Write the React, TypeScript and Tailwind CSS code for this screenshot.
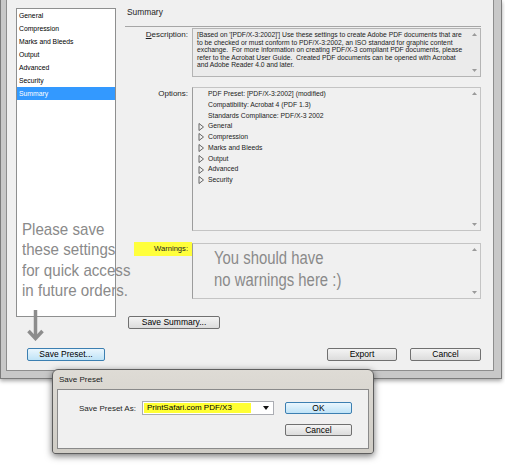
import type { ReactNode } from 'react';

const ui = "font-['Liberation_Sans',Arial,sans-serif]";

const categories = ['General', 'Compression', 'Marks and Bleeds', 'Output', 'Advanced', 'Security', 'Summary'];
const sections = ['General', 'Compression', 'Marks and Bleeds', 'Output', 'Advanced', 'Security'];

function Button({ children, className = '', focused = false }: { children: ReactNode; className?: string; focused?: boolean }) {
    return (
        <div
            className={`flex items-center justify-center rounded-[2px] border text-[8.5px] leading-none text-black ${
                focused
                    ? 'border-[#3c7fb1] bg-gradient-to-b from-[#eaf6fd] to-[#bfe3f7]'
                    : 'border-[#707070] bg-gradient-to-b from-[#f4f4f4] to-[#dcdcdc]'
            } ${className}`}
        >
            {children}
        </div>
    );
}

function ScrollArrows() {
    return (
        <div className="flex w-[12px] flex-col items-center justify-between py-[4px]">
            <svg width="5" height="3" viewBox="0 0 5 3">
                <polygon points="2.5,0 5,3 0,3" fill="#9a9a9a" />
            </svg>
            <svg width="5" height="3" viewBox="0 0 5 3">
                <polygon points="0,0 5,0 2.5,3" fill="#9a9a9a" />
            </svg>
        </div>
    );
}

function Label({ children }: { children: ReactNode }) {
    return <div className="w-[67px] pr-[4px] text-right text-[8px] leading-[10px] text-[#1e1e1e]">{children}</div>;
}

export default function App() {
    return (
        <div className={`relative h-[473px] w-[505px] overflow-hidden bg-white ${ui}`}>
            {/* main dialog frame */}
            <div className="h-[379px] w-[502px] border-x border-b border-[#7b7b7b] bg-[#c8c8c8] pb-[7px] pl-[5px] pr-[7px] shadow-[0_2px_4px_rgba(0,0,0,0.35)]">
                <div className="flex h-full flex-col border-x border-b border-[#8d8d8d] bg-[#f0f0f0]">
                    <div className="flex">
                        {/* left list */}
                        <div className="relative ml-[9px] mt-[8px] w-[100px]">
                            <div className="h-[309px] border border-[#8e8f8f] bg-white">
                                {categories.map((c) => (
                                    <div
                                        key={c}
                                        className={`h-[13px] pl-[2px] text-[6.8px] leading-[13px] ${
                                            c === 'Summary' ? 'bg-[#3399ff] text-white' : 'text-black'
                                        }`}
                                    >
                                        {c}
                                    </div>
                                ))}
                            </div>
                            <div className="absolute left-[6px] top-[212px] origin-left scale-x-[0.89] whitespace-nowrap text-[17px] leading-[20.3px] text-[#8a8a8a]">
                                Please save
                                <br />
                                these settings
                                <br />
                                for quick access
                                <br />
                                in future orders.
                            </div>
                            <svg className="absolute left-[11px] top-[302px]" width="17" height="31" viewBox="0 0 17 31">
                                <path d="M8.5 0 V28" stroke="#8c8c8c" strokeWidth="3.5" fill="none" />
                                <path d="M1.5 21 L8.5 28.5 L15.5 21" stroke="#8c8c8c" strokeWidth="3.5" fill="none" />
                            </svg>
                        </div>

                        {/* right panel */}
                        <div className="ml-[9px] w-[356px] pt-[7px]">
                            <div className="pl-[2px] text-[8.4px] leading-[10px] text-[#1e1e1e]">Summary</div>
                            <div className="mt-[9px] h-px bg-[#a6a6a6]" />

                            <div className="mt-[1px] flex">
                                <Label>
                                    <div className="pt-[2px]">
                                        <span className="underline">D</span>escription:
                                    </div>
                                </Label>
                                <div className="flex h-[49px] w-[289px] border border-[#b4b4b4] bg-[#ebebeb]">
                                    <div className="flex-1 pl-[4px] pr-[2px] pt-[2px] text-[6.75px] leading-[7.5px] text-[#222]">
                                        [Based on '[PDF/X-3:2002]'] Use these settings to create Adobe PDF documents that are to be checked or must conform to PDF/X-3:2002, an ISO standard for graphic content exchange.&nbsp; For more information on creating PDF/X-3 compliant PDF documents, please refer to the Acrobat User Guide.&nbsp; Created PDF documents can be opened with Acrobat and Adobe Reader 4.0 and later.
                                    </div>
                                    <ScrollArrows />
                                </div>
                            </div>

                            <div className="mt-[10px] flex">
                                <Label>
                                    <div className="pt-[2px]">Options:</div>
                                </Label>
                                <div className="flex h-[144px] w-[289px] border border-[#c4c4c4] border-l-[#9c9c9c] bg-[#f0f0f0]">
                                    <div className="flex-1 pl-[5px] pt-[1px] text-[6.8px] leading-[10.75px] text-[#222]">
                                        <div className="pl-[10px]">PDF Preset: [PDF/X-3:2002] (modified)</div>
                                        <div className="pl-[10px]">Compatibility: Acrobat 4 (PDF 1.3)</div>
                                        <div className="pl-[10px]">Standards Compliance: PDF/X-3 2002</div>
                                        {sections.map((s) => (
                                            <div key={s} className="flex items-center">
                                                <svg width="10" height="8" viewBox="0 0 10 8">
                                                    <polygon points="1,0.5 5.5,4 1,7.5" fill="none" stroke="#666" strokeWidth="1" />
                                                </svg>
                                                <span>{s}</span>
                                            </div>
                                        ))}
                                    </div>
                                    <ScrollArrows />
                                </div>
                            </div>

                            <div className="mt-[12px] flex">
                                <div className="w-[67px] pl-[9px]">
                                    <div className="-mt-px flex h-[14px] items-center justify-end bg-[#ffff3c] pr-[4px] text-[7.6px] text-[#1e1e1e]">
                                        Warnings:
                                    </div>
                                </div>
                                <div className="flex h-[56px] w-[289px] border border-[#c4c4c4] border-l-[#9c9c9c] bg-[#f0f0f0]">
                                    <div className="flex-1 pl-[21px] pt-[3px]">
                                        <div className="origin-left scale-x-[0.85] whitespace-nowrap text-[17.5px] leading-[22px] text-[#8a8a8a]">
                                            You should have
                                            <br />
                                            no warnings here :)
                                        </div>
                                    </div>
                                    <ScrollArrows />
                                </div>
                            </div>

                            <Button className="ml-[3px] mt-[17px] h-[13px] w-[92px]">Save Summary...</Button>
                        </div>
                    </div>

                    {/* bottom buttons */}
                    <div className="mt-[19px] flex">
                        <Button focused className="ml-[20px] h-[13px] w-[78px]">
                            Save Preset...
                        </Button>
                        <Button className="ml-auto h-[13px] w-[70px]">Export</Button>
                        <Button className="ml-[13px] mr-[12px] h-[13px] w-[71px]">Cancel</Button>
                    </div>
                </div>
            </div>

            {/* Save Preset dialog */}
            <div className="absolute left-[52px] top-[369px] flex h-[85px] w-[322px] flex-col rounded-t-[6px] rounded-b-[3px] border border-[#5e5e5e] bg-gradient-to-b from-[#dedbd5] to-[#cfccc5] px-[4px] pb-[4px] shadow-[0_2px_7px_rgba(0,0,0,0.55)]">
                <div className="flex h-[19px] items-center pl-[2px] text-[8px] text-[#1a1a1a]">Save Preset</div>
                <div className="flex flex-1 border border-[#8a8a8a] bg-[#f0f0f0] pl-[21px] pt-[11px]">
                    <div className="pt-[3px] text-[8px] leading-[9px] text-[#1e1e1e]">Save Preset As:</div>
                    <div className="ml-[6px] flex h-[14px] w-[132px] items-stretch border border-[#abadb3] bg-white p-px">
                        <div className="flex w-[107px] items-center bg-[#ffff33] pl-[3px] text-[8px] text-black">PrintSafari.com PDF/X3</div>
                        <div className="flex flex-1 items-center justify-end pr-[3px]">
                            <svg width="6" height="4" viewBox="0 0 6 4">
                                <polygon points="0,0 6,0 3,4" fill="#111" />
                            </svg>
                        </div>
                    </div>
                    <div className="ml-[11px] flex flex-col gap-[10px] pt-px">
                        <Button focused className="h-[12px] w-[67px]">
                            OK
                        </Button>
                        <Button className="h-[12px] w-[67px]">Cancel</Button>
                    </div>
                </div>
            </div>
        </div>
    );
}
